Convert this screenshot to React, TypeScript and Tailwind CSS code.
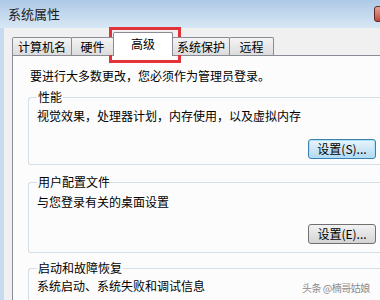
export default function App() {
  const tabs = [
    { label: '计算机名', w: 'w-[60px]', active: false },
    { label: '硬件', w: 'w-[43px]', active: false },
    { label: '高级', w: 'w-[60px]', active: true },
    { label: '系统保护', w: 'w-[58px]', active: false },
    { label: '远程', w: 'w-[45px]', active: false },
  ];

  return (
    <div className="relative w-[380px] h-[300px] overflow-hidden bg-[#f0f0f0] font-['Noto_Sans_CJK_SC',sans-serif] text-[12px] leading-4 text-black">
      {/* Title bar */}
      <div className="flex h-[28px] items-center bg-gradient-to-b from-[#adc9e6] to-[#d8e7f4] pl-[8px]">
        <span className="text-[13px] text-[#1c1c1c]">系统属性</span>
        <div className="ml-auto mr-[-32px] h-[16px] w-[38px] shrink-0 rounded-[3px] border border-[#5e2a25] bg-gradient-to-b from-[#e3a49c] to-[#bf4338]" />
      </div>

      <div className="flex h-[272px]">
        <div className="w-[4px] shrink-0 bg-[#c6dbf0]" />
        <div className="min-w-0 flex-1 pl-[8px]">
          {/* Tabs */}
          <div className="relative z-10 flex h-[27px] items-end">
            {tabs.map((t, i) =>
              t.active ? (
                <div
                  key={t.label}
                  className={`${t.w} -ml-px mb-[-1px] flex h-[24px] shrink-0 items-center justify-center rounded-t-[2px] border border-b-0 border-[#898c95] bg-white pb-[2px]`}
                >
                  {t.label}
                </div>
              ) : (
                <div
                  key={t.label}
                  className={`${t.w} ${i === 0 ? '' : '-ml-px'} flex h-[18px] shrink-0 items-center justify-center rounded-t-[2px] border border-b-0 border-[#898c95] bg-gradient-to-b from-[#f4f4f4] to-[#dcdcdc]`}
                >
                  {t.label}
                </div>
              )
            )}
          </div>

          {/* Tab panel */}
          <div className="h-[245px] border-l border-t border-[#898c95] bg-[#fcfcfc] pl-[15px] pt-[12px]">
            <div className="ml-[2px]">要进行大多数更改，您必须作为管理员登录。</div>

            <fieldset className="mt-[5px] rounded-l-[3px] border border-r-0 border-[#d5dfe5] pl-[8px] pb-[5px]">
              <legend className="px-[1px] leading-4">性能</legend>
              <div className="mt-[3px]">视觉效果，处理器计划，内存使用，以及虚拟内存</div>
              <div className="mt-[15px] flex justify-end pr-[4px]">
                <button className="flex h-[20px] w-[68px] items-center justify-center rounded-[3px] border border-[#3c7fb1] bg-gradient-to-b from-[#e8f4fb] to-[#b4d9ef] shadow-[inset_0_0_0_1px_#a8e3fb] text-[12px]">
                  设置(S)...
                </button>
              </div>
            </fieldset>

            <fieldset className="mt-[9px] rounded-l-[3px] border border-r-0 border-[#d5dfe5] pl-[8px] pb-[8px]">
              <legend className="px-[1px] leading-4">用户配置文件</legend>
              <div className="mt-[4px]">与您登录有关的桌面设置</div>
              <div className="mt-[14px] flex justify-end pr-[4px]">
                <button className="flex h-[20px] w-[68px] items-center justify-center rounded-[3px] border border-[#707070] bg-gradient-to-b from-[#f2f2f2] to-[#d4d4d4] text-[12px]">
                  设置(E)...
                </button>
              </div>
            </fieldset>

            <fieldset className="mt-[7px] rounded-l-[3px] border border-r-0 border-[#d5dfe5] pl-[8px] pb-[8px]">
              <legend className="px-[1px] leading-4">启动和故障恢复</legend>
              <div className="mt-[2px]">系统启动、系统失败和调试信息</div>
            </fieldset>
          </div>
        </div>
      </div>

      {/* Red highlight annotation */}
      <div className="absolute left-[109px] top-[27px] h-[36px] w-[72px] border-[3px] border-[#e2333b]" />

      {/* Watermark */}
      <div className="absolute left-[302px] top-[280px] whitespace-nowrap text-[10px] leading-4 tracking-[-0.5px] text-[#8c8c8c]">头条 @楠哥姑娘</div>
    </div>
  );
}
